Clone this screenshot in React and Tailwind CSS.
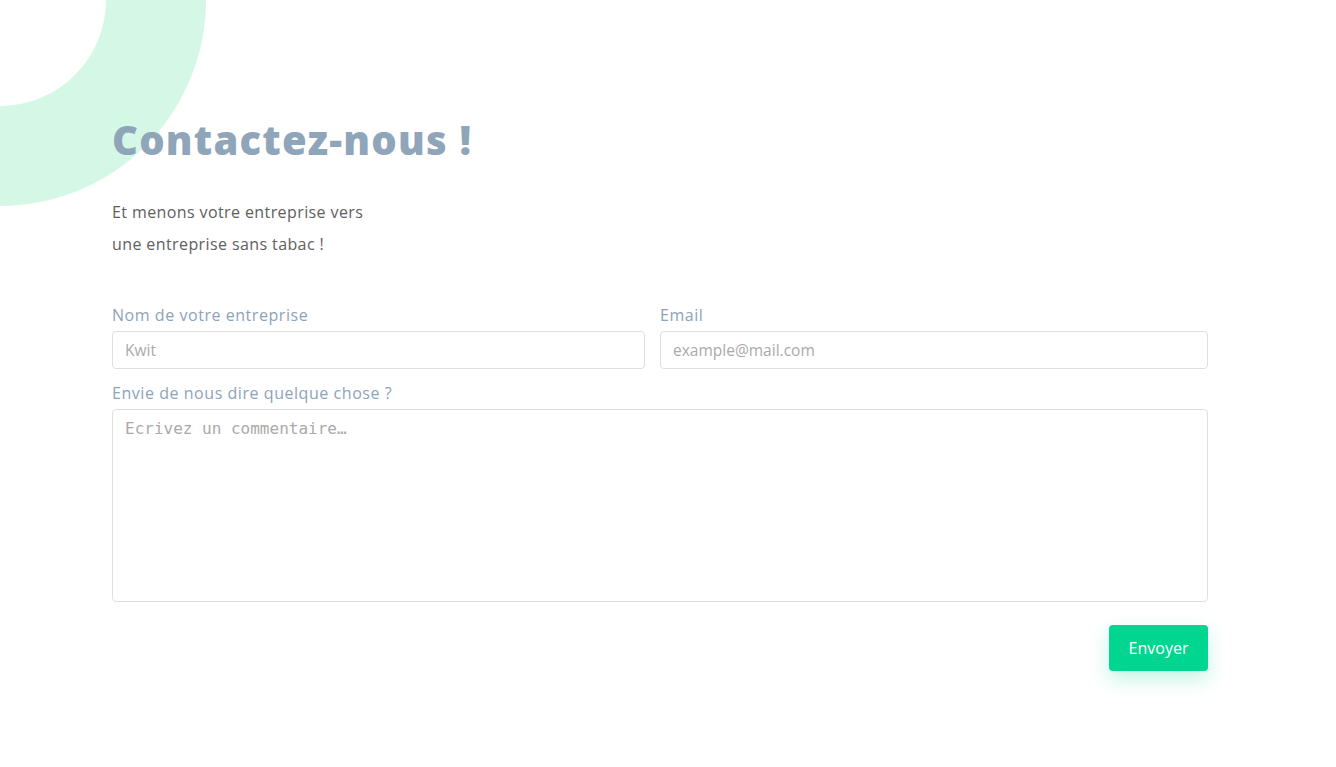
import React from 'react'

const Contact = () => {
  return (
    <div className="relative min-h-[767px] bg-white overflow-hidden font-['Open_Sans',sans-serif]">
      {/* anneau décoratif */}
      <div className="absolute -left-[206px] -top-[206px] w-[412px] h-[412px] rounded-full border-[100px] border-[#d5f8e6]" />

      <div className="relative ml-[112px] w-[1096px] pt-[116px]">
        <h1 className="text-[40px] leading-[48px] font-extrabold text-[#8fa5ba] tracking-[1.2px]">
          Contactez-nous !
        </h1>
        <p className="mt-[32px] text-[16px] leading-[32px] text-[#606060] tracking-[0.4px]">
          Et menons votre entreprise vers
          <br />
          une entreprise sans tabac !
        </p>

        <form className="mt-[43px]" onSubmit={(e) => e.preventDefault()}>
          <div className="grid grid-cols-[533px_1fr] gap-x-[15px]">
            <div>
              <label className="block text-[16px] leading-[24px] text-[#8da3b9] tracking-[0.55px]">Nom de votre entreprise</label>
              <input
                className="mt-1 block w-full h-[38px] px-3 rounded-[4px] border border-[#dcdfe3] text-[15.5px] placeholder:text-[#aaa] outline-none"
                placeholder="Kwit"
              />
            </div>
            <div>
              <label className="block text-[16px] leading-[24px] text-[#8da3b9] tracking-[0.55px]">Email</label>
              <input
                className="mt-1 block w-full h-[38px] px-3 rounded-[4px] border border-[#dcdfe3] text-[15.5px] placeholder:text-[#aaa] outline-none"
                placeholder="example@mail.com"
              />
            </div>
          </div>

          <label className="mt-3 block text-[16px] leading-[24px] text-[#8da3b9] tracking-[0.55px]">Envie de nous dire quelque chose ?</label>
          <textarea
            className="mt-1 block w-full h-[193px] px-3 py-[9px] rounded-[4px] border border-[#dcdfe3] text-[16px] leading-[20px] font-['DejaVu_Sans_Mono',monospace] placeholder:text-[#aaa] outline-none resize-none"
            placeholder="Ecrivez un commentaire…"
          />

          <div className="mt-[23px] flex justify-end">
            <button
              type="submit"
              className="h-[46px] w-[99px] rounded-[4px] bg-[#00d68f] text-white text-[16px] shadow-[0_8px_20px_rgba(0,214,143,0.25)]"
            >
              Envoyer
            </button>
          </div>
        </form>
      </div>
    </div>
  )
}

export default function App() {
  return <Contact />
}
